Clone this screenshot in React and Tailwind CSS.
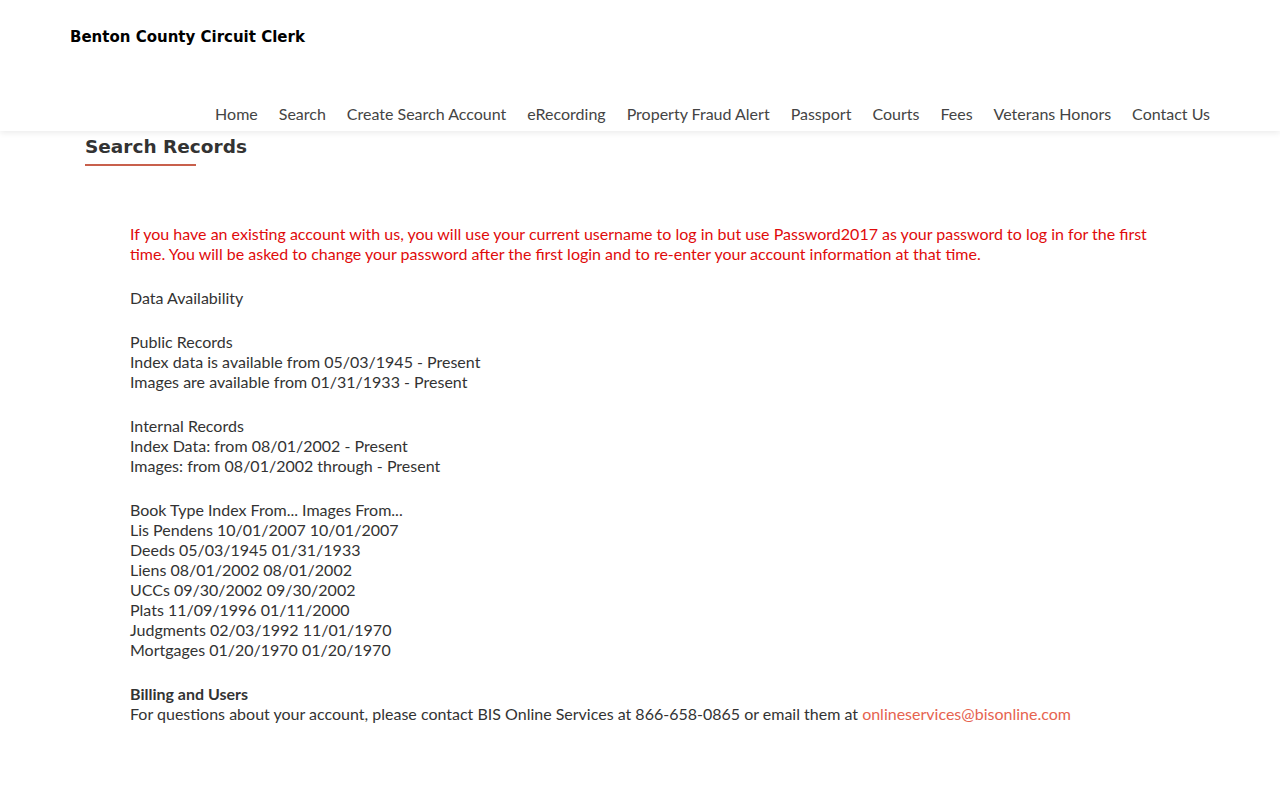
import React from "react";

const nav = ["Home","Search","Create Search Account","eRecording","Property Fraud Alert","Passport","Courts","Fees","Veterans Honors","Contact Us"];

export default function App() {
  return (
    <div className="min-h-[800px] bg-white" style={{fontFamily: "Lato, 'Open Sans', sans-serif"}}>
      <header className="relative z-10 h-[131px] bg-white shadow-[0_2px_6px_rgba(0,0,0,0.08)]">
        <div className="pl-[70px] pt-[27px]">
          <div className="text-[15px] font-bold text-black leading-5" style={{fontFamily: "'DejaVu Sans', sans-serif"}}>Benton County Circuit Clerk</div>
        </div>
        <nav className="flex justify-end gap-[21px] pr-[70px] pt-[57px] text-[16px] text-[#444] leading-5">
          {nav.map(n => <span key={n}>{n}</span>)}
        </nav>
      </header>
      <main className="px-[85px]">
        <h1 className="pt-[1px] text-[18.5px] font-bold text-[#333] leading-[30px]" style={{fontFamily: "'DejaVu Sans', sans-serif"}}>Search Records</h1>
        <div className="mt-[2px] h-[2px] w-[111px] bg-[#c8604c]"></div>
        <div className="px-[45px] pt-[58px] text-[16px] leading-5 text-[#333]">
          <p className="text-[#e00b0b] mb-6">If you have an existing account with us, you will use your current username to log in but use Password2017 as your password to log in for the first time. You will be asked to change your password after the first login and to re-enter your account information at that time.</p>
          <p className="mb-6">Data Availability</p>
          <p className="mb-6">Public Records<br/>Index data is available from 05/03/1945 - Present<br/>Images are available from 01/31/1933 - Present</p>
          <p className="mb-6">Internal Records<br/>Index Data: from 08/01/2002 - Present<br/>Images: from 08/01/2002 through - Present</p>
          <p className="mb-6">Book Type Index From... Images From...<br/>Lis Pendens 10/01/2007 10/01/2007<br/>Deeds 05/03/1945 01/31/1933<br/>Liens 08/01/2002 08/01/2002<br/>UCCs 09/30/2002 09/30/2002<br/>Plats 11/09/1996 01/11/2000<br/>Judgments 02/03/1992 11/01/1970<br/>Mortgages 01/20/1970 01/20/1970</p>
          <p><strong className="font-bold">Billing and Users</strong><br/>For questions about your account, please contact BIS Online Services at 866-658-0865 or email them at <a className="text-[#e6634f]">onlineservices@bisonline.com</a></p>
        </div>
      </main>
    </div>
  );
}
